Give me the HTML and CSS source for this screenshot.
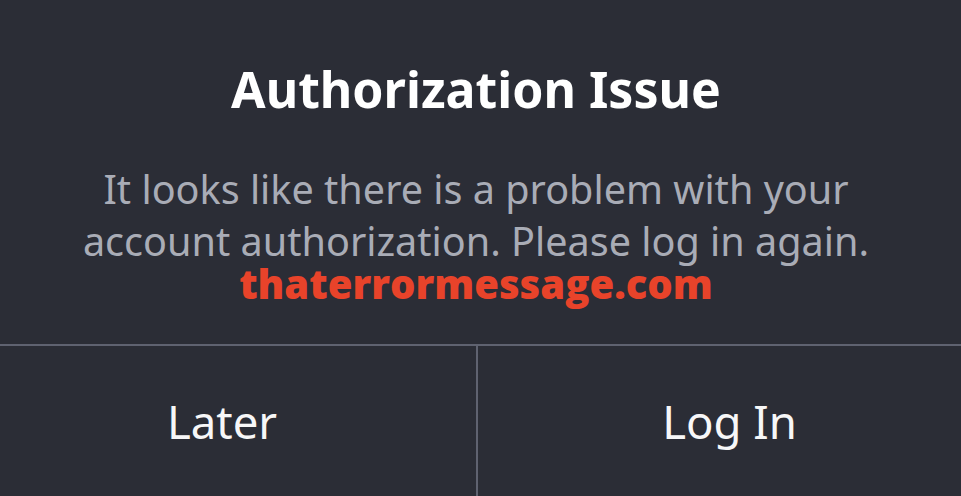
FILE: index.html
```html
<!DOCTYPE html>
<html lang="en">
<head>
<meta charset="utf-8">
<title>Authorization Issue</title>
<link rel="stylesheet" href="styles.css">
</head>
<body>
<div class="dialog">
  <div class="content">
    <h1 class="title">Authorization Issue</h1>
    <p class="message">It looks like there is a problem with your<br>account authorization. Please log in again.</p>
    <div class="watermark">thaterrormessage.com</div>
  </div>
  <div class="actions">
    <div class="action action-left">Later</div>
    <div class="action action-right">Log In</div>
  </div>
</div>
</body>
</html>
```
FILE: styles.css
```css
html, body {
  margin: 0;
  padding: 0;
  background: #2b2d36;
}
body {
  font-family: "Noto Sans", "Open Sans", sans-serif;
  width: 961px;
  height: 496px;
  overflow: hidden;
}
.dialog {
  display: flex;
  flex-direction: column;
  height: 496px;
}
.content {
  height: 344px;
  box-sizing: border-box;
  padding: 59px 9px 0 0;
  text-align: center;
}
.title {
  margin: 0;
  font-size: 50px;
  line-height: 60px;
  font-weight: 700;
  color: #ffffff;
}
.message {
  margin: 44px 0 0;
  font-size: 39.6px;
  line-height: 52px;
  font-weight: 400;
  color: #a9acb6;
}
.watermark {
  margin-top: 0;
  font-family: "Open Sans", sans-serif;
  font-size: 40px;
  line-height: 34px;
  font-weight: 800;
  color: #e8432a;
}
.actions {
  flex: 1;
  display: grid;
  grid-template-columns: 476px 1fr;
  border-top: 2px solid #5f6270;
}
.action {
  text-align: center;
  font-size: 45.5px;
  line-height: 60px;
  color: #f7f7f8;
  padding-top: 45px;
}
.action-left {
  padding-right: 32px;
}
.action-right {
  border-left: 2px solid #5f6270;
  padding-left: 20px;
}
```
